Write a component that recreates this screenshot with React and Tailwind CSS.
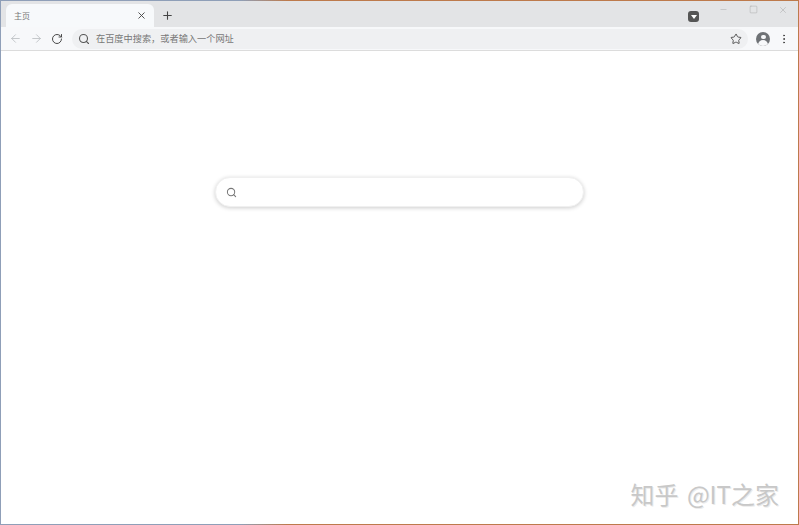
import React from "react";
import { ArrowLeft, ArrowRight, RotateCw, Search, Star, X, Plus, Minus, Square, MoreVertical } from "lucide-react";

const font = "font-['Noto_Sans_CJK_SC','Noto_Sans',sans-serif]";

export default function App() {
  return (
    <div className={`w-[799px] h-[525px] p-[1px] overflow-hidden bg-[linear-gradient(to_right,#8f9fb8_0%,#8f9fb8_30%,#bd7a4c_36%,#bd7a4c_100%)] ${font}`}>
      <div className="relative flex flex-col w-full h-full bg-white">
        {/* TAB STRIP */}
        <div className="h-[26px] shrink-0 flex items-end bg-[#e3e4e6] pl-[5px]">
          <div className="w-[148px] h-[23px] flex items-center justify-between pl-[8px] pr-[7px] bg-[#f7f9fb] rounded-t-[6px]">
            <span className="text-[8px] text-[#777]">主页</span>
            <X size={11} strokeWidth={2} className="text-[#444]" />
          </div>
          <div className="ml-[7px] h-[23px] flex items-center">
            <Plus size={13} strokeWidth={2} className="text-[#444]" />
          </div>
          <div className="ml-auto self-stretch flex">
            <div className="mt-[10px] mr-[9px] w-[11px] h-[11px] rounded-[3px] bg-[#555] flex items-center justify-center">
              <div className="w-0 h-0 border-x-[3px] border-x-transparent border-t-[4px] border-t-white" />
            </div>
            <div className="w-[30px] flex justify-center pt-[4px]">
              <Minus size={9} strokeWidth={1} className="text-[#999]" />
            </div>
            <div className="w-[30px] flex justify-center pt-[4px]">
              <Square size={9} strokeWidth={1} className="text-[#999]" />
            </div>
            <div className="w-[30px] flex justify-center pt-[4px]">
              <X size={10} strokeWidth={1} className="text-[#999]" />
            </div>
          </div>
        </div>

        {/* TOOLBAR */}
        <div className="h-[24px] shrink-0 flex items-center bg-[#f7f8fa] border-b border-[#dcdcdc] pl-[8px] pr-[8px]">
          <ArrowLeft size={13} strokeWidth={1.5} className="text-[#b9bcc0]" />
          <ArrowRight size={13} strokeWidth={1.5} className="ml-[8px] text-[#b9bcc0]" />
          <RotateCw size={12} strokeWidth={2} className="ml-[8px] text-[#4a4a4a]" />
          <div className="ml-[9px] w-[676px] h-[20px] flex items-center bg-[#eff0f2] rounded-full pl-[6px] pr-[6px]">
            <Search size={12} strokeWidth={2.2} className="text-[#555]" />
            <span className="ml-[6px] text-[9.2px] text-[#777]">在百度中搜索，或者输入一个网址</span>
            <Star size={12} strokeWidth={1.8} className="ml-auto text-[#444]" />
          </div>
          <div className="ml-[8px] w-[14px] h-[14px] rounded-full bg-[#6f7276] overflow-hidden flex flex-col items-center">
            <div className="mt-[3px] w-[5px] h-[5px] rounded-full bg-[#f7f8fa]" />
            <div className="mt-[1px] w-[10px] h-[6px] rounded-t-full bg-[#f7f8fa]" />
          </div>
          <MoreVertical size={12} strokeWidth={2} className="ml-[8px] text-[#444]" />
        </div>

        {/* PAGE */}
        <div className="flex-1 flex justify-center items-start pt-[126px]">
          <div className="w-[369px] h-[30px] flex items-center pl-[10px] bg-white rounded-full border border-[#f0f0f0] shadow-[0_1px_4px_rgba(0,0,0,0.2)]">
            <Search size={11} strokeWidth={2.2} className="text-[#777]" />
          </div>
        </div>

        {/* WATERMARK */}
        <div className="absolute right-[19px] bottom-[15px] text-[24px] leading-[30px] [word-spacing:3px] text-[#c8c8c8] whitespace-nowrap [text-shadow:1px_1px_0_#ececec]">
          知乎 @IT之家
        </div>
      </div>
    </div>
  );
}
